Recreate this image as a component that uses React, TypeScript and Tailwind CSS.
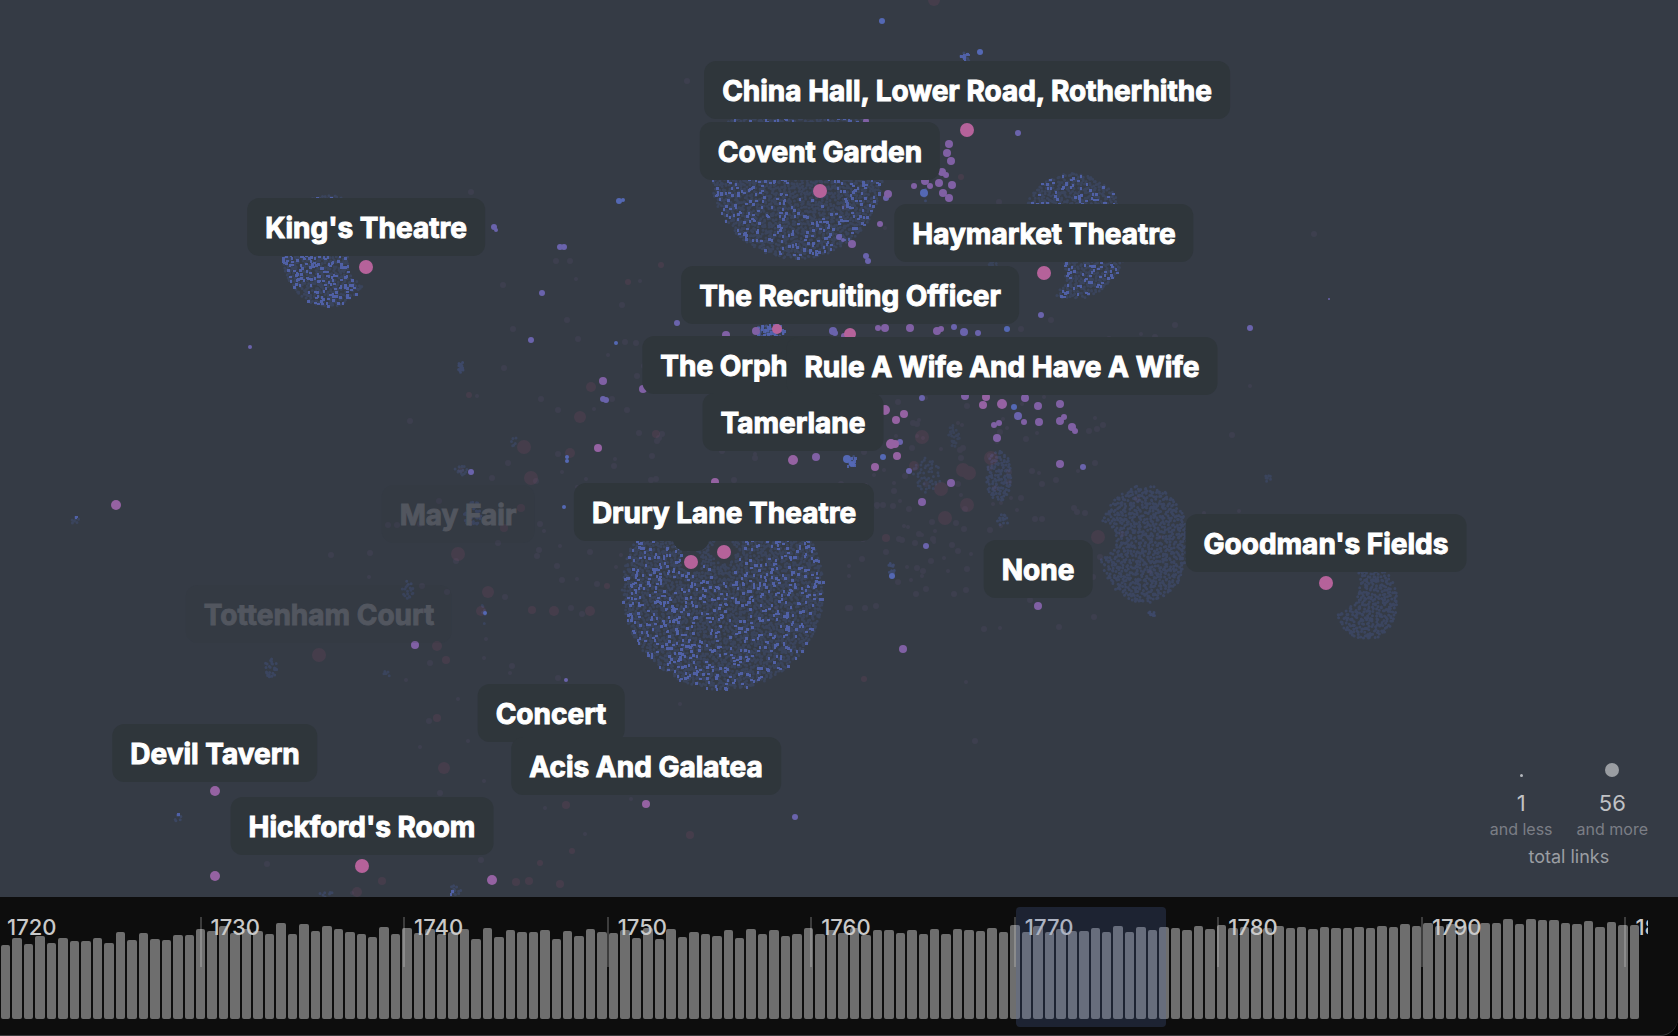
import React from "react";

type Dot = [x: number, y: number, r: number];

const BLUE = "#5468b4";
const VIOLET = "#6a63ac";
const PURPLE = "#8060a4";
const ORCHID = "#9562a2";
const PINK = "#b5629a";

/* Deterministic pseudo random numbers, so the field looks the same on every load. */
function makeRandom(seed: number) {
  let s = seed;
  return () => {
    s = (s + 0x6d2b79f5) | 0;
    let t = Math.imul(s ^ (s >>> 15), 1 | s);
    t = (t + Math.imul(t ^ (t >>> 7), 61 | t)) ^ t;
    return ((t ^ (t >>> 14)) >>> 0) / 4294967296;
  };
}

type Cluster = {
  cx: number;
  cy: number;
  rx: number;
  ry: number;
  step: number;
  bright: number;
  dim: number;
  holes?: Dot[];
  sparse?: Dot[];
};

const clusters: Cluster[] = [
  { cx: 797, cy: 173, rx: 86, ry: 86, step: 3, bright: 0.24, dim: 0.2, sparse: [[816, 192, 24]] },
  { cx: 1073, cy: 236, rx: 55, ry: 63, step: 3, bright: 0.24, dim: 0.2, holes: [[1036, 273, 29]] },
  { cx: 328, cy: 251, rx: 46, ry: 56, step: 3, bright: 0.38, dim: 0.2, holes: [[374, 262, 26]] },
  { cx: 723, cy: 589, rx: 101, ry: 101, step: 3, bright: 0.23, dim: 0.2, holes: [[724, 552, 12], [691, 561, 11]], sparse: [[716, 556, 28]] },
  { cx: 1144, cy: 544, rx: 45, ry: 59, step: 3, bright: 0, dim: 0.24, holes: [[1098, 539, 18]] },
  { cx: 1366, cy: 602, rx: 32, ry: 38, step: 3, bright: 0, dim: 0.24, holes: [[1326, 583, 34]] },
  { cx: 999, cy: 476, rx: 13, ry: 25, step: 3, bright: 0, dim: 0.24 },
  { cx: 927, cy: 475, rx: 14, ry: 18, step: 4, bright: 0, dim: 0.2 },
  { cx: 954, cy: 436, rx: 6, ry: 11, step: 3, bright: 0, dim: 0.16 },
  { cx: 473, cy: 514, rx: 9, ry: 13, step: 3, bright: 0, dim: 0.28 },
  { cx: 408, cy: 590, rx: 6, ry: 9, step: 3, bright: 0, dim: 0.24 },
  { cx: 271, cy: 668, rx: 7, ry: 9, step: 3, bright: 0, dim: 0.24 },
  { cx: 461, cy: 470, rx: 6, ry: 6, step: 3, bright: 0, dim: 0.22 },
  { cx: 461, cy: 367, rx: 3, ry: 6, step: 2, bright: 0, dim: 0.3 },
  { cx: 965, cy: 57, rx: 6, ry: 5, step: 3, bright: 0.8, dim: 0.3 },
  { cx: 770, cy: 331, rx: 14, ry: 8, step: 3, bright: 0.9, dim: 0.5 },
  { cx: 850, cy: 461, rx: 6, ry: 6, step: 3, bright: 0.5, dim: 0.4 },
  { cx: 76, cy: 521, rx: 4, ry: 5, step: 3, bright: 0.5, dim: 0.2 },
  { cx: 892, cy: 568, rx: 4, ry: 7, step: 3, bright: 0, dim: 0.35 },
  { cx: 178, cy: 818, rx: 4, ry: 4, step: 3, bright: 0.4, dim: 0.25 },
  { cx: 455, cy: 891, rx: 6, ry: 6, step: 3, bright: 0.25, dim: 0.25 },
  { cx: 326, cy: 894, rx: 7, ry: 3, step: 3, bright: 0, dim: 0.25 },
  { cx: 1152, cy: 614, rx: 4, ry: 3, step: 2, bright: 0, dim: 0.3 },
  { cx: 1003, cy: 520, rx: 6, ry: 6, step: 3, bright: 0, dim: 0.25 },
  { cx: 387, cy: 673, rx: 4, ry: 4, step: 3, bright: 0, dim: 0.2 },
  { cx: 483, cy: 616, rx: 2, ry: 12, step: 3, bright: 0, dim: 0.2 },
  { cx: 513, cy: 441, rx: 4, ry: 5, step: 3, bright: 0, dim: 0.2 },
  { cx: 1268, cy: 478, rx: 3, ry: 5, step: 3, bright: 0, dim: 0.2 },
  { cx: 994, cy: 264, rx: 6, ry: 4, step: 3, bright: 0, dim: 0.18 },
  { cx: 924, cy: 195, rx: 3, ry: 7, step: 3, bright: 0, dim: 0.3 },
];

function within(x: number, y: number, dots: Dot[] = []) {
  return dots.some(([cx, cy, r]) => (x - cx) ** 2 + (y - cy) ** 2 < r * r);
}

function clusterPaths(c: Cluster, seed: number) {
  const rnd = makeRandom(seed);
  let bright = "";
  let dim = "";
  const inside = (x: number, y: number) => ((x - c.cx) / c.rx) ** 2 + ((y - c.cy) / c.ry) ** 2 <= 1 && !within(x, y, c.holes);
  for (let y = c.cy - c.ry; y <= c.cy + c.ry; y += c.step) {
    for (let x = c.cx - c.rx; x <= c.cx + c.rx; x += c.step) {
      const px = x + (rnd() - 0.5) * 3;
      const py = y + (rnd() - 0.5) * 3;
      const bx = Math.round(x + (rnd() - 0.5) * 7);
      const by = Math.round(y + (rnd() - 0.5) * 7);
      const roll = rnd();
      const size = rnd();
      if (inside(px, py)) dim += `M${px.toFixed(1)} ${py.toFixed(1)}h0`;
      const chance = within(bx, by, c.sparse) ? c.bright * 0.15 : c.bright;
      if (roll < chance && inside(bx, by)) {
        const w = size < 0.6 ? 3 : 2;
        const h = size > 0.3 ? 3 : 2;
        bright += `M${bx - 1} ${by - 1}h${w}v${h}h-${w}z`;
      }
    }
  }
  return { bright, dim };
}

const fields = clusters.map((c, i) => ({ ...clusterPaths(c, 100 + i * 17), opacity: c.dim }));

const dotGroups: { fill: string; dots: Dot[] }[] = [
  {
    fill: BLUE,
    dots: [
      [882, 21, 3], [980, 52, 3], [619, 201, 3], [623, 200, 2], [924, 193, 4], [616, 343, 2], [567, 457, 2], [567, 461, 2],
      [1014, 407, 3], [883, 457, 3], [847, 459, 4], [852, 464, 3], [892, 576, 3], [564, 507, 2], [485, 613, 2], [1007, 329, 3],
    ],
  },
  {
    fill: VIOLET,
    dots: [
      [494, 227, 3], [496, 230, 2], [560, 247, 3], [564, 247, 3], [542, 293, 3], [531, 340, 3], [250, 347, 2], [603, 399, 3], [606, 400, 3],
      [1018, 133, 3], [866, 256, 3], [868, 261, 3], [839, 237, 3], [843, 240, 2], [677, 323, 3], [833, 331, 4], [835, 333, 3], [1041, 315, 3],
      [1250, 328, 3], [1329, 299, 1], [909, 471, 3], [1083, 467, 3], [926, 546, 3], [566, 680, 2], [795, 817, 3], [471, 472, 3],
      [954, 327, 3], [964, 332, 4], [978, 333, 3], [900, 442, 3], [922, 398, 3], [1018, 416, 4], [886, 198, 3],
    ],
  },
  {
    fill: PURPLE,
    dots: [
      [949, 144, 4], [947, 153, 4], [951, 161, 4], [942, 172, 4], [946, 175, 3], [952, 185, 4], [939, 183, 4], [930, 186, 3], [914, 186, 3],
      [943, 193, 4], [949, 198, 4], [888, 194, 4], [880, 224, 3], [852, 244, 4], [866, 121, 3], [925, 181, 4], [603, 381, 4], [643, 389, 4],
      [756, 331, 4], [726, 335, 4], [844, 336, 3], [878, 328, 3], [885, 328, 4], [910, 328, 4], [937, 331, 4], [941, 329, 3], [965, 396, 4],
      [1025, 398, 4], [1038, 406, 4], [1060, 404, 4], [1024, 422, 3], [1039, 422, 4], [994, 425, 3], [999, 423, 3], [1060, 421, 4],
      [1064, 417, 3], [1072, 427, 4], [1075, 431, 3], [997, 438, 4], [816, 457, 4], [951, 483, 4], [922, 502, 4], [1060, 464, 4],
      [903, 649, 4], [415, 645, 4], [1038, 606, 4],
    ],
  },
  {
    fill: ORCHID,
    dots: [
      [598, 448, 4], [116, 505, 5], [885, 410, 5], [904, 414, 4], [896, 420, 4], [891, 444, 5], [895, 444, 4], [897, 456, 4], [875, 467, 4],
      [793, 460, 5], [715, 482, 4], [986, 397, 4], [983, 405, 4], [1002, 404, 5], [215, 791, 5], [215, 876, 5], [492, 880, 5], [646, 804, 4],
    ],
  },
  {
    fill: PINK,
    dots: [
      [967, 130, 7], [820, 191, 7], [1044, 273, 7], [366, 267, 7], [724, 552, 7], [691, 562, 7], [1326, 583, 7], [362, 866, 7],
      [777, 329, 5], [850, 334, 6],
    ],
  },
];

const fadedDots: Dot[] = [
  [922, 437, 7], [991, 458, 7], [963, 470, 7], [969, 473, 7], [941, 489, 7], [967, 505, 7], [945, 518, 7], [1098, 537, 7], [524, 447, 7],
  [531, 478, 7], [458, 554, 7], [488, 592, 6], [481, 611, 5], [554, 611, 5], [590, 611, 5], [319, 655, 7], [437, 646, 5], [446, 660, 4],
  [580, 417, 6], [591, 387, 5], [570, 453, 5], [469, 395, 3], [934, 0, 6], [444, 768, 6], [382, 881, 4], [357, 892, 5], [560, 884, 4],
  [516, 882, 4], [529, 881, 4], [566, 805, 4], [690, 835, 4], [572, 851, 3], [540, 863, 3], [437, 718, 4], [532, 610, 4], [521, 508, 4],
  [504, 528, 4], [656, 434, 4], [628, 282, 3], [661, 265, 3], [961, 177, 3], [914, 466, 5], [886, 538, 4], [864, 679, 3], [607, 586, 3],
];

function scatter(seed: number, n: number, cx: number, cy: number, sx: number, sy: number): Dot[] {
  const rnd = makeRandom(seed);
  const g = () => rnd() + rnd() + rnd() - 1.5;
  return Array.from({ length: n }, () => [Math.round(cx + g() * sx), Math.round(cy + g() * sy), 2 + Math.round(rnd() * 1.4)]);
}

const dust: Dot[] = [
  ...scatter(7, 120, 960, 490, 150, 130),
  ...scatter(8, 60, 900, 450, 320, 200),
  ...scatter(11, 60, 520, 650, 170, 330),
  ...scatter(15, 34, 600, 430, 130, 180),
  ...scatter(21, 30, 840, 400, 700, 480),
];

function NetworkField() {
  return (
    <svg className="absolute top-0 left-0" width="1678" height="897" viewBox="0 0 1678 897" aria-hidden="true">
      {fields.map((f, i) => (
        <g key={i}>
          <path d={f.dim} fill="none" stroke="#5068b8" strokeWidth={3} strokeLinecap="round" opacity={f.opacity} />
          <path d={f.bright} fill="#5568b8" opacity={0.82} />
        </g>
      ))}
      <g fill="#80609c" opacity={0.11}>
        {dust.map(([x, y, r], i) => (
          <circle key={i} cx={x} cy={y} r={r} />
        ))}
      </g>
      <g fill="#b5507a" opacity={0.12}>
        {fadedDots.map(([x, y, r], i) => (
          <circle key={i} cx={x} cy={y} r={r} />
        ))}
      </g>
      {dotGroups.map((g) => (
        <g key={g.fill} fill={g.fill}>
          {g.dots.map(([x, y, r], i) => (
            <circle key={i} cx={x} cy={y} r={r} />
          ))}
        </g>
      ))}
    </svg>
  );
}

type Label = { text: string; x: number; bottom: number; faded?: boolean };

/* Anchor of each label: horizontal centre and lower edge, just above its node. */
const labels: Label[] = [
  { text: "May Fair", x: 458, bottom: 543, faded: true },
  { text: "Tottenham Court", x: 319, bottom: 643, faded: true },
  { text: "", x: 691, bottom: 551 },
  { text: "China Hall, Lower Road, Rotherhithe", x: 967, bottom: 119 },
  { text: "Covent Garden", x: 820, bottom: 180 },
  { text: "King's Theatre", x: 366, bottom: 256 },
  { text: "Haymarket Theatre", x: 1044, bottom: 262 },
  { text: "The Recruiting Officer", x: 850, bottom: 324 },
  { text: "The Orphan", x: 741, bottom: 394 },
  { text: "Rule A Wife And Have A Wife", x: 1002, bottom: 395 },
  { text: "Tamerlane", x: 793, bottom: 451 },
  { text: "Drury Lane Theatre", x: 724, bottom: 541 },
  { text: "None", x: 1038, bottom: 598 },
  { text: "Goodman's Fields", x: 1326, bottom: 572 },
  { text: "Concert", x: 551, bottom: 742 },
  { text: "Devil Tavern", x: 215, bottom: 782 },
  { text: "Acis And Galatea", x: 646, bottom: 795 },
  { text: "Hickford's Room", x: 362, bottom: 855 },
];

function NodeLabel({ text, x, bottom, faded }: Label) {
  return (
    <div
      className={
        "absolute flex h-[58px] -translate-x-1/2 -translate-y-full items-center rounded-xl px-[18px] pt-[2px] text-[28px] leading-none font-bold whitespace-nowrap " +
        (faded
          ? "bg-[#2f363b]/15 text-[#52565f] [-webkit-text-stroke:1px_#52565f]"
          : "bg-[#2f363b] text-white [-webkit-text-stroke:1px_white]")
      }
      style={{ left: x, top: bottom }}
    >
      {text}
    </div>
  );
}

function Legend() {
  return (
    <div className="absolute right-[30px] bottom-6 flex flex-col items-center">
      <div className="flex gap-6 text-center">
        <div className="flex flex-col items-center">
          <span className="flex h-4 items-end pb-px"><i className="size-[3px] rounded-full bg-[#b4b7bc]" /></span>
          <span className="mt-[11px] text-[22px] leading-7 text-[#c0c2c5]">1</span>
          <span className="text-[16px] leading-6 text-[#7b7e86]">and less</span>
        </div>
        <div className="flex flex-col items-center">
          <span className="flex h-4 items-center"><i className="size-[14px] rounded-full bg-[#9a9da2]" /></span>
          <span className="mt-[11px] text-[22px] leading-7 text-[#c0c2c5]">56</span>
          <span className="text-[16px] leading-6 text-[#7b7e86]">and more</span>
        </div>
      </div>
      <span className="text-[18px] leading-8 text-[#9b9ea3]">total links</span>
    </div>
  );
}

const barHeights = [
  74, 81, 75, 83, 76, 81, 78, 78, 81, 76, 87, 79, 86, 80, 79, 84, 84, 90, 88, 93, 86, 90, 88, 85, 96, 85, 95, 88, 93, 90, 87, 85, 82, 92, 85,
  91, 86, 90, 85, 87, 90, 80, 91, 82, 89, 87, 87, 89, 80, 88, 83, 90, 87, 86, 89, 81, 91, 80, 90, 82, 87, 85, 83, 89, 81, 90, 85, 89, 83, 85,
  91, 85, 89, 86, 91, 84, 89, 89, 86, 89, 85, 90, 85, 90, 89, 88, 91, 87, 94, 87, 93, 87, 90, 88, 88, 91, 87, 93, 87, 92, 89, 92, 91, 89, 93,
  90, 94, 91, 92, 91, 91, 93, 91, 92, 90, 92, 91, 91, 92, 91, 93, 92, 95, 93, 96, 93, 95, 93, 95, 96, 96, 100, 95, 100, 99, 99, 96, 95, 98,
  92, 97, 94, 94,
];

const decades = [1720, 1730, 1740, 1750, 1760, 1770, 1780, 1790, 1800];

/* Share of the timeline's width taken by one year. */
const YEAR = 12.352 / 10;

function Timeline() {
  return (
    <section aria-label="Timeline" className="h-[139px] shrink-0 bg-black">
      <div className="h-full rounded-br-[18px] border-b border-[#3a3a3c] bg-[#0d0d0d] pr-[30px]">
        <div className="relative h-full overflow-hidden pr-2 pl-px">
          <div className="flex h-[122px] items-end gap-[2px]">
            {barHeights.map((h, i) => (
              <div key={i} className="flex-1 rounded-[2px] bg-[#6e6e6e]" style={{ height: h }} />
            ))}
          </div>
          {decades.map((year) => (
            <div
              key={year}
              className="absolute top-5 -ml-1 h-[50px] border-l-2 border-white/20 pl-[9px] text-[22px] leading-5 font-medium text-[#c9c9c9]"
              style={{ left: `${(year - 1720) * YEAR}%` }}
            >
              {year}
            </div>
          ))}
          <div className="absolute top-[10px] bottom-2 rounded bg-[#546dab]/24" style={{ left: "61.65%", width: "9.1%" }} />
        </div>
      </div>
    </section>
  );
}

export default function App() {
  return (
    <div className="flex h-screen flex-col overflow-hidden bg-[#353b45] font-['Inter',sans-serif]">
      <main className="relative min-h-0 flex-1 overflow-hidden">
        <NetworkField />
        {labels.map((l) => (
          <NodeLabel key={l.text} {...l} />
        ))}
        <Legend />
      </main>
      <Timeline />
    </div>
  );
}
